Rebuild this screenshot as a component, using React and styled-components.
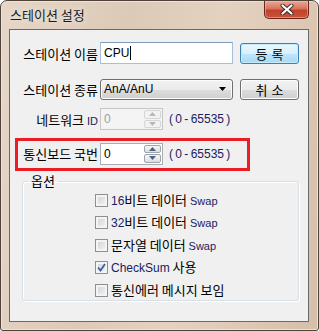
import styled, { createGlobalStyle } from "styled-components"

const GlobalStyle = createGlobalStyle`
    html, body {
        margin: 0;
        padding: 0;
        background: #ffffff;
    }
    * {
        box-sizing: border-box;
    }
`

const Window = styled.div`
    width: 319px;
    height: 331px;
    display: flex;
    flex-direction: column;
    border: 1px solid #4f4238;
    border-radius: 7px 7px 3px 3px;
    background: linear-gradient(100deg, #e6d6c7 0%, #dccab8 35%, #e4d2c1 60%, #d6bfa9 100%);
    box-shadow: inset 0 0 0 1px #efe3d7;
    font-family: "Liberation Sans", "Noto Sans CJK KR", sans-serif;
    font-size: 12px;
    color: #000;
    overflow: hidden;
`

const TitleBar = styled.div`
    height: 28px;
    display: flex;
    align-items: flex-start;
    justify-content: space-between;
    padding: 0 9px 0 9px;
`

const Title = styled.span`
    margin-top: 6px;
    font-family: "Noto Sans CJK KR", sans-serif;
    font-size: 13px;
    line-height: 16px;
    color: #1a1a1a;
    text-shadow: 0 0 6px rgba(255, 255, 255, 0.8);
`

const CloseButton = styled.div`
    width: 45px;
    height: 18px;
    display: flex;
    align-items: center;
    justify-content: center;
    border: 1px solid #6b2418;
    border-top: none;
    border-radius: 0 0 5px 5px;
    background: linear-gradient(to bottom, #e9a894 0%, #d8735c 45%, #c2412a 55%, #c9533a 100%);
    box-shadow: inset 0 0 0 1px rgba(255, 200, 180, 0.5);
`

const Client = styled.div`
    flex: 1;
    margin: 0 9px 8px 8px;
    border: 1px solid #6a6a6a;
    background: #f0f0f0;
    padding-top: 12px;
    display: flex;
    flex-direction: column;
`

const Row = styled.div`
    display: flex;
    align-items: center;
    height: ${p => p.h || 22}px;
    margin-bottom: ${p => p.mb || 0}px;
`

const Label = styled.span`
    width: ${p => p.w || 88}px;
    margin-right: 2px;
    text-align: right;
    font-family: "Noto Sans CJK KR", sans-serif;
    font-size: 13px;
    white-space: nowrap;
    color: ${p => p.disabled ? '#6d6d6d' : '#000'};
`

const Latin = styled.span`
    font-family: "Liberation Sans", sans-serif;
    font-size: ${p => p.size || 11}px;
    color: #1c2160;
`

const TextBox = styled.div`
    width: ${p => p.w}px;
    height: ${p => p.h || 22}px;
    display: flex;
    align-items: center;
    padding-left: 3px;
    border: 1px solid ${p => p.focused ? '#a7bfd9' : '#b5b5b5'};
    border-top-color: ${p => p.focused ? '#7f9db9' : '#abadb3'};
    background: ${p => p.disabled ? '#f4f4f4' : '#fff'};
    font-family: "Liberation Sans", sans-serif;
    font-size: 12px;
    color: ${p => p.disabled ? '#a0a0a0' : '#000'};
`

const Caret = styled.span`
    display: inline-block;
    width: 1px;
    height: 14px;
    margin-left: 1px;
    background: #000;
`

const Spin = styled.div`
    width: ${p => p.w}px;
    height: ${p => p.h || 22}px;
    display: flex;
    border: 1px solid ${p => p.disabled ? '#c6c6c6' : '#abadb3'};
    background: ${p => p.disabled ? '#f4f4f4' : '#fff'};
`

const SpinValue = styled.div`
    flex: 1;
    display: flex;
    align-items: center;
    padding-left: 3px;
    font-family: "Liberation Sans", sans-serif;
    font-size: 12px;
    color: ${p => p.disabled ? '#a0a0a0' : '#000'};
`

const SpinButtons = styled.div`
    width: 18px;
    display: flex;
    flex-direction: column;
    gap: 1px;
    padding: 1px 1px 1px 0;
`

const SpinButton = styled.div`
    flex: 1;
    display: flex;
    align-items: center;
    justify-content: center;
    border: 1px solid ${p => p.disabled ? '#d5d5d5' : '#9fa5ad'};
    border-radius: 2px;
    background: ${p => p.disabled ? '#f2f2f2' : 'linear-gradient(to bottom, #f6f6f6, #dedede)'};
`

const Range = styled.span`
    margin-left: 6px;
    font-family: "Liberation Sans", sans-serif;
    font-size: 12px;
    color: #1c2160;
    word-spacing: -1px;
`

const Button = styled.div`
    width: 59px;
    height: 21px;
    margin-left: ${p => p.ml || 7}px;
    display: flex;
    align-items: center;
    justify-content: center;
    border: 1px solid ${p => p.primary ? '#3c7fb1' : '#707070'};
    border-radius: 3px;
    background: ${p => p.primary
        ? 'linear-gradient(to bottom, #eaf6fd 0%, #d9f0fc 50%, #bee6fd 51%, #a7d9f5 100%)'
        : 'linear-gradient(to bottom, #f2f2f2 0%, #ebebeb 50%, #dddddd 51%, #cfcfcf 100%)'};
    box-shadow: inset 0 0 0 1px ${p => p.primary ? '#c5ecfc' : '#fcfcfc'};
    font-family: "Noto Sans CJK KR", sans-serif;
    font-size: 13px;
    letter-spacing: 4px;
    text-indent: 4px;
`

const Select = styled.div`
    width: 133px;
    height: 21px;
    display: flex;
    align-items: center;
    justify-content: space-between;
    padding: 0 6px 0 3px;
    border: 1px solid #707070;
    border-radius: 3px;
    background: linear-gradient(to bottom, #f2f2f2 0%, #ebebeb 50%, #dddddd 51%, #cfcfcf 100%);
    box-shadow: inset 0 0 0 1px #fcfcfc;
    font-family: "Liberation Sans", sans-serif;
    font-size: 12px;
`

const Highlight = styled.div`
    width: 235px;
    margin: 8px 0 2px 5px;
    border: 3px solid #ec1c24;
    padding: 1px 0 3px 0;
`

const Group = styled.fieldset`
    margin: 0 9px 0 12px;
    padding: 0;
    height: 128px;
    border: 1px solid #d5dfe5;
    border-radius: 3px;
    box-shadow: 1px 1px 0 #ffffff, inset 1px 1px 0 #ffffff;
`

const Legend = styled.legend`
    margin-left: 5px;
    padding: 0 3px 0 3px;
    font-family: "Noto Sans CJK KR", sans-serif;
    font-size: 13px;
    line-height: 16px;
`

const OptionList = styled.div`
    display: flex;
    flex-direction: column;
    padding-left: 72px;
`

const Option = styled.label`
    height: 22.5px;
    display: flex;
    align-items: center;
    font-family: "Noto Sans CJK KR", sans-serif;
    font-size: 13px;
    line-height: 16px;
    white-space: pre;
`

const Box = styled.span`
    width: 13px;
    height: 13px;
    margin-right: 3px;
    display: flex;
    align-items: center;
    justify-content: center;
    border: 1px solid #8f8f8f;
    background-image: linear-gradient(135deg, #cbcfd5, #f6f6f6);
    background-clip: content-box;
    padding: 2px;
    box-shadow: inset 0 0 0 2px #f4f4f4;
`

const Arrow = ({ up, color }) => (
    <svg width="7" height="4" viewBox="0 0 7 4">
        <path d={up ? "M0 4 L3.5 0 L7 4 Z" : "M0 0 L3.5 4 L7 0 Z"} fill={color} />
    </svg>
)

const SpinBox = ({ value, disabled }) => (
    <Spin w={63} h={22} disabled={disabled}>
        <SpinValue disabled={disabled}>{value}</SpinValue>
        <SpinButtons>
            <SpinButton disabled={disabled}><Arrow up color={disabled ? '#b8b8b8' : '#4d6185'} /></SpinButton>
            <SpinButton disabled={disabled}><Arrow color={disabled ? '#b8b8b8' : '#4d6185'} /></SpinButton>
        </SpinButtons>
    </Spin>
)

const CheckBox = ({ checked, children }) => (
    <Option>
        <Box>
            {checked &&
                <svg width="9" height="9" viewBox="0 0 9 9" style={{ flex: 'none' }}>
                    <path d="M1 4.5 L3.5 7.5 L8 1" fill="none" stroke="#3b5ea3" strokeWidth="1.8" />
                </svg>}
        </Box>
        <span>{children}</span>
    </Option>
)

const CloseIcon = () => (
    <svg width="14" height="11" viewBox="0 0 14 11">
        <path d="M2.5 1.5 L11.5 9.5 M11.5 1.5 L2.5 9.5" stroke="#3a2a28" strokeWidth="4" strokeLinecap="round" />
        <path d="M2.5 1.5 L11.5 9.5 M11.5 1.5 L2.5 9.5" stroke="#ffffff" strokeWidth="2.2" strokeLinecap="round" />
    </svg>
)

const App = () => {
    const options = [
        { label: <><Latin size={12}>16</Latin>비트 데이터 <Latin>Swap</Latin></> },
        { label: <><Latin size={12}>32</Latin>비트 데이터 <Latin>Swap</Latin></> },
        { label: <>문자열 데이터 <Latin>Swap</Latin></> },
        { label: <><Latin size={12}>CheckSum</Latin> 사용</>, checked: true },
        { label: <>통신에러 메시지 보임</> },
    ]
    return (
        <>
            <GlobalStyle />
            <Window>
                <TitleBar>
                    <Title>스테이션 설정</Title>
                    <CloseButton><CloseIcon /></CloseButton>
                </TitleBar>
                <Client>
                    <Row h={22} mb={14}>
                        <Label>스테이션 이름</Label>
                        <TextBox w={133} focused>CPU<Caret /></TextBox>
                        <Button primary>등록</Button>
                    </Row>
                    <Row h={22} mb={8}>
                        <Label>스테이션 종류</Label>
                        <Select>
                            AnA/AnU
                            <Arrow color="#000" />
                        </Select>
                        <Button>취소</Button>
                    </Row>
                    <Row h={22}>
                        <Label>네트워크 <Latin>ID</Latin></Label>
                        <SpinBox value="0" disabled />
                        <Range>( 0 - 65535 )</Range>
                    </Row>
                    <Highlight>
                        <Row h={23}>
                            <Label w={80}>통신보드 국번</Label>
                            <SpinBox value="0" />
                            <Range>( 0 - 65535 )</Range>
                        </Row>
                    </Highlight>
                    <Group>
                        <Legend>옵션</Legend>
                        <OptionList>
                            {options.map((o, i) => (
                                <CheckBox key={i} checked={o.checked}>{o.label}</CheckBox>
                            ))}
                        </OptionList>
                    </Group>
                </Client>
            </Window>
        </>
    )
}

export default App
